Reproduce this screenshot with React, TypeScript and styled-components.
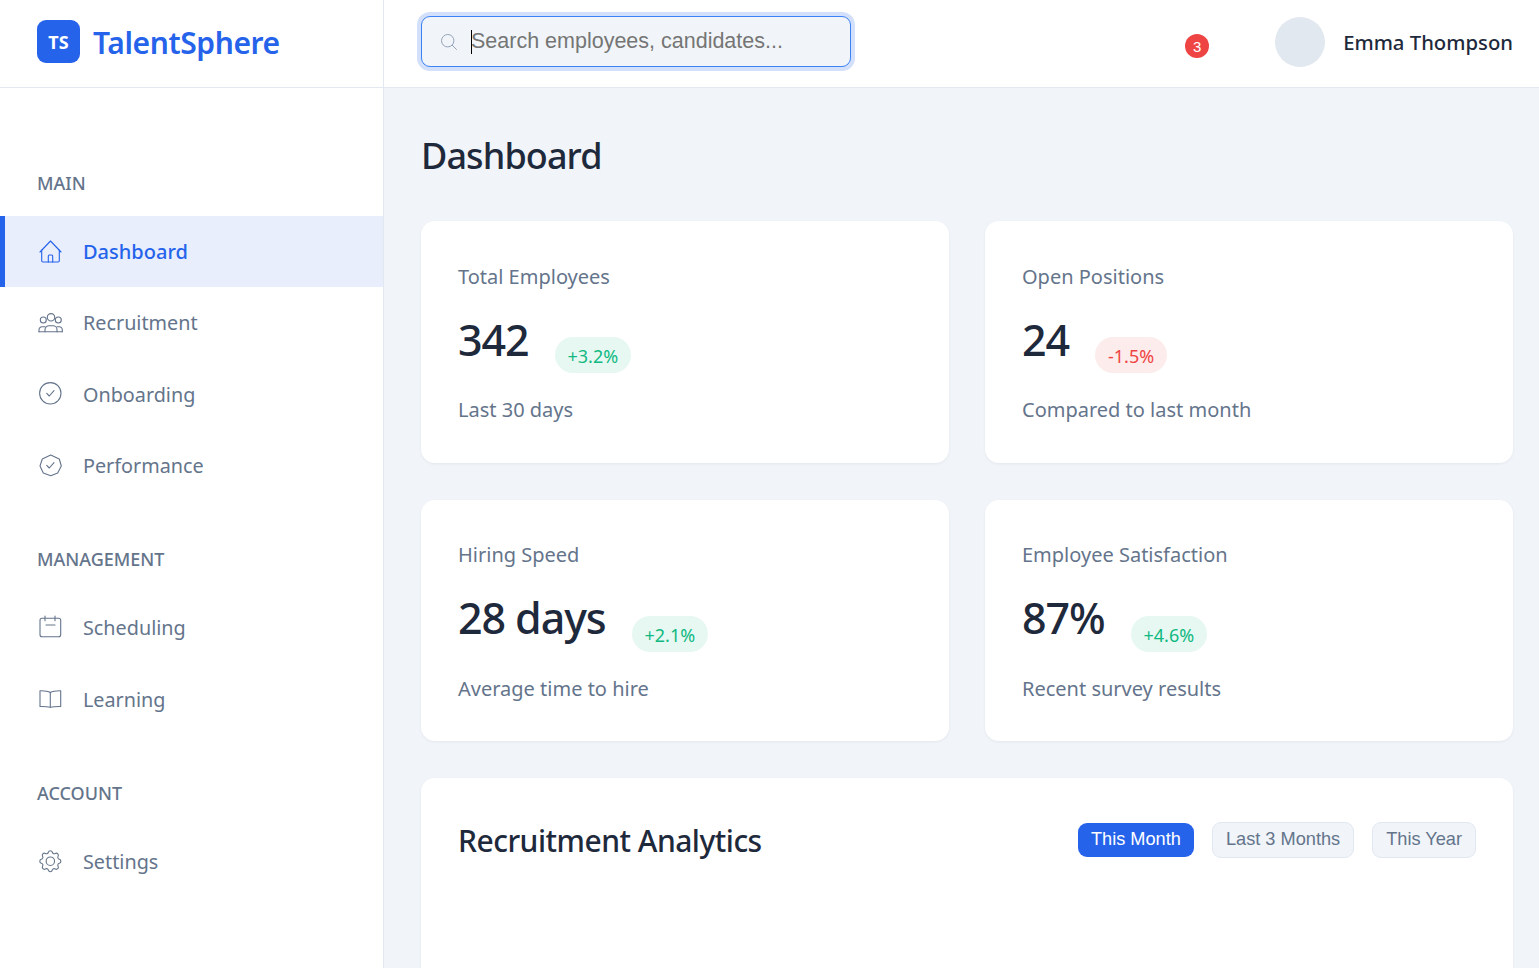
import React from "react";
import styled, { createGlobalStyle } from "styled-components";
import { HiOutlineMagnifyingGlass } from "react-icons/hi2";

const GlobalStyle = createGlobalStyle`
  html, body {
    margin: 0;
    height: 100%;
    overflow: hidden;
    background: #f1f5f9;
    font-family: "Noto Sans", sans-serif;
  }
  * {
    box-sizing: border-box;
  }
`;

const Shell = styled.div`
  display: grid;
  grid-template-columns: 384px 1fr;
  grid-template-rows: 88px 1fr;
  height: 968px;
  overflow: hidden;
`;

const Brand = styled.div`
  display: flex;
  align-items: center;
  gap: 13px;
  padding: 0 37px 4px;
  background: #fff;
  border-right: 1px solid #e2e8f0;
  border-bottom: 1px solid #e2e8f0;
`;

const LogoMark = styled.div`
  display: flex;
  align-items: center;
  justify-content: center;
  width: 43px;
  height: 43px;
  border-radius: 9px;
  background: #2563eb;
  color: #fff;
  font-size: 18px;
  font-weight: 700;
`;

const LogoText = styled.span`
  margin-top: 1px;
  color: #2563eb;
  font-size: 30px;
  font-weight: 600;
  letter-spacing: -0.4px;
`;

const Topbar = styled.header`
  display: flex;
  align-items: center;
  justify-content: space-between;
  padding: 0 26px 4px 37px;
  background: #fff;
  border-bottom: 1px solid #e2e8f0;
`;

const SearchBox = styled.label`
  display: flex;
  align-items: center;
  width: 430px;
  height: 51px;
  padding: 0 17px;
  gap: 12px;
  background: #f1f5f9;
  border: 1px solid #3b82f6;
  border-radius: 9px;
  box-shadow: 0 0 0 4px rgba(37, 99, 235, 0.2);
  color: #94a3b8;
  font-size: 20px;

  svg {
    flex: none;
    stroke-width: 1.2;
  }
`;

const SearchField = styled.span`
  position: relative;
  display: flex;
  flex: 1;
  min-width: 0;

  &::before {
    content: "";
    position: absolute;
    left: 0;
    top: 0;
    width: 1px;
    height: 24px;
    background: #000;
  }
`;

const SearchInput = styled.input`
  flex: 1;
  min-width: 0;
  height: 24px;
  padding: 0;
  border: 0;
  outline: 0;
  background: transparent;
  color: #1e293b;
  caret-color: #000;
  font-family: "Liberation Sans", sans-serif;
  font-size: 21.5px;

  &::placeholder {
    color: #757575;
    opacity: 1;
  }
`;

const UserArea = styled.div`
  display: flex;
  align-items: center;
`;

const CountBadge = styled.span`
  display: flex;
  align-items: center;
  justify-content: center;
  width: 24px;
  height: 24px;
  margin-top: 9px;
  margin-right: 66px;
  border-radius: 50%;
  background: #ef4444;
  color: #fff;
  font-family: "Liberation Sans", sans-serif;
  font-size: 15px;
`;

const Avatar = styled.div`
  width: 50px;
  height: 50px;
  margin-right: 18px;
  border-radius: 50%;
  background: #e2e8f0;
`;

const UserName = styled.span`
  margin-top: 1px;
  color: #1e293b;
  font-size: 20.3px;
  font-weight: 500;
`;

const Sidebar = styled.aside`
  padding-top: 83px;
  background: #fff;
  border-right: 1px solid #e2e8f0;
`;

const NavSection = styled.section`
  margin-bottom: 46px;
`;

const SectionLabel = styled.h3`
  margin: 0 0 21px;
  padding: 0 37px;
  color: #64748b;
  font-size: 18px;
  font-weight: 500;
  line-height: 24px;
`;

const NavItem = styled.a<{ $active?: boolean }>`
  display: flex;
  align-items: center;
  gap: 19px;
  height: 71.3px;
  padding-left: ${({ $active }) => ($active ? "33px" : "38px")};
  border-left: ${({ $active }) => ($active ? "5px solid #2563eb" : "0")};
  background: ${({ $active }) => ($active ? "#e8eefc" : "transparent")};
  color: ${({ $active }) => ($active ? "#2563eb" : "#64748b")};
  font-size: ${({ $active }) => ($active ? "20px" : "19.8px")};
  font-weight: ${({ $active }) => ($active ? 500 : 400)};
`;

const NavIcon = styled.svg.attrs({ viewBox: "0 0 26 26", fill: "none" })`
  flex: none;
  width: 26px;
  height: 26px;
  stroke: currentColor;
  stroke-width: 1.1;
  stroke-linecap: round;
  stroke-linejoin: round;
`;

const Main = styled.main`
  padding: 0 26px 0 37px;
`;

const PageTitle = styled.h1`
  margin: 41px 0 38px;
  color: #1e293b;
  font-size: 36px;
  font-weight: 500;
  letter-spacing: -0.9px;
  line-height: 54px;
`;

const StatGrid = styled.div`
  display: grid;
  grid-template-columns: 1fr 1fr;
  gap: 37px 36px;
  margin-bottom: 37px;
`;

const Card = styled.div`
  background: #fff;
  border-radius: 14px;
  box-shadow: 0 1px 3px rgba(15, 23, 42, 0.06);
`;

const StatCard = styled(Card)`
  height: 241.5px;
  padding: 39.7px 37px 0;
`;

const StatLabel = styled.div`
  color: #64748b;
  font-size: 20px;
  line-height: 32px;
`;

const StatRow = styled.div`
  display: flex;
  align-items: flex-start;
  gap: 26px;
  margin-top: 18.3px;
  height: 62px;
`;

const StatValue = styled.span`
  color: #1e293b;
  font-size: 43px;
  font-weight: 500;
  letter-spacing: -1.1px;
  line-height: 58px;
`;

const Change = styled.span<{ $down?: boolean }>`
  display: flex;
  align-items: center;
  height: 36px;
  margin-top: 26.3px;
  padding: 2px 13px 0;
  border-radius: 18px;
  background: ${({ $down }) => ($down ? "#fdecec" : "#e7f8f2")};
  color: ${({ $down }) => ($down ? "#ef4444" : "#10b981")};
  font-size: 18px;
`;

const StatNote = styled.div`
  margin-top: 21.3px;
  color: #64748b;
  font-size: 20px;
  line-height: 32px;
`;

const ChartCard = styled(Card)`
  height: 420px;
  padding: 42px 37px;
`;

const ChartHeader = styled.div`
  display: flex;
  align-items: center;
  justify-content: space-between;
`;

const ChartTitle = styled.h2`
  margin: 0;
  color: #1e293b;
  font-size: 30px;
  font-weight: 500;
  letter-spacing: -0.5px;
`;

const RangeTabs = styled.div`
  display: flex;
  align-items: center;
  gap: 18px;
  margin-top: -2px;
`;

const RangeButton = styled.button<{ $active?: boolean }>`
  height: ${({ $active }) => ($active ? "34px" : "36px")};
  padding: 0 13px;
  border: ${({ $active }) => ($active ? "0" : "1px solid #e2e8f0")};
  border-radius: 9px;
  background: ${({ $active }) => ($active ? "#2563eb" : "#f1f5f9")};
  color: ${({ $active }) => ($active ? "#fff" : "#64748b")};
  font-family: "Liberation Sans", sans-serif;
  font-size: 18.2px;
`;

const HomeIcon = () => (
  <NavIcon>
    <path d="M2 13 12.5 2 23 13" />
    <path d="M3.7 11v10.8a1.2 1.2 0 0 0 1.2 1.2h15.2a1.2 1.2 0 0 0 1.2-1.2V11" />
    <path d="M10.3 23v-6a1 1 0 0 1 1-1h2.4a1 1 0 0 1 1 1v6" />
  </NavIcon>
);

const PeopleIcon = () => (
  <NavIcon>
    <circle cx="13" cy="7.3" r="3.7" />
    <circle cx="5.3" cy="10" r="3" />
    <circle cx="20.3" cy="10" r="3" />
    <path d="M1 21.7h23.3" />
    <path d="M7 21.7v-2a4 4 0 0 1 4-4h4a4 4 0 0 1 4 4v2" />
    <path d="M1 21.7v-2a3 3 0 0 1 3-3h3" />
    <path d="M24.3 21.7v-2a3 3 0 0 0-3-3h-2.3" />
  </NavIcon>
);

const CheckCircleIcon = () => (
  <NavIcon>
    <circle cx="12.3" cy="12.3" r="10.7" />
    <path d="M8.7 12.3 11.3 15 16 9.7" />
  </NavIcon>
);

const BadgeIcon = () => (
  <NavIcon>
    <path d="M12.7 2 21.3 6 23.3 13 19.7 20 12.7 22.7 5.3 20 2 13 4.3 6Z" />
    <path d="M8.7 12.3 11.3 15 16 9.7" />
  </NavIcon>
);

const CalendarIcon = () => (
  <NavIcon>
    <rect x="2" y="3.3" width="20.7" height="18.4" rx="2" />
    <path d="M7 1v4.7M17 1v4.7M8 10h9" />
  </NavIcon>
);

const BookIcon = () => (
  <NavIcon>
    <path d="M12.3 6.5C10 5 6 4.7 3 4.7H2v15.8h1c3 0 7 .2 9.3.8 2.3-.6 5.7-.8 9.4-.8h1V4.7h-1c-3.7 0-7.1.3-9.4 1.8Z" />
    <path d="M12.3 6.5v14.8" />
  </NavIcon>
);

const GearIcon = () => (
  <NavIcon>
    <g transform="translate(-1.7 -0.8) scale(1.17)">
      <path
        vectorEffect="non-scaling-stroke"
        d="M10.325 4.317c.426-1.756 2.924-1.756 3.35 0a1.724 1.724 0 002.573 1.066c1.543-.94 3.31.826 2.37 2.37a1.724 1.724 0 001.065 2.572c1.756.426 1.756 2.924 0 3.35a1.724 1.724 0 00-1.066 2.573c.94 1.543-.826 3.31-2.37 2.37a1.724 1.724 0 00-2.572 1.065c-.426 1.756-2.924 1.756-3.35 0a1.724 1.724 0 00-2.573-1.066c-1.543.94-3.31-.826-2.37-2.37a1.724 1.724 0 00-1.065-2.572c-1.756-.426-1.756-2.924 0-3.35a1.724 1.724 0 001.066-2.573c-.94-1.543.826-3.31 2.37-2.37.996.608 2.296.07 2.572-1.065z"
      />
      <circle vectorEffect="non-scaling-stroke" cx="12" cy="12" r="3.6" />
    </g>
  </NavIcon>
);

const stats = [
  { label: "Total Employees", value: "342", change: "+3.2%", note: "Last 30 days" },
  { label: "Open Positions", value: "24", change: "-1.5%", down: true, note: "Compared to last month" },
  { label: "Hiring Speed", value: "28 days", change: "+2.1%", note: "Average time to hire" },
  { label: "Employee Satisfaction", value: "87%", change: "+4.6%", note: "Recent survey results" },
];

const App = () => {
  return (
    <Shell>
      <GlobalStyle />
      <Brand>
        <LogoMark>TS</LogoMark>
        <LogoText>TalentSphere</LogoText>
      </Brand>
      <Topbar>
        <SearchBox>
          <HiOutlineMagnifyingGlass />
          <SearchField>
            <SearchInput autoFocus placeholder="Search employees, candidates..." />
          </SearchField>
        </SearchBox>
        <UserArea>
          <CountBadge>3</CountBadge>
          <Avatar />
          <UserName>Emma Thompson</UserName>
        </UserArea>
      </Topbar>
      <Sidebar>
        <NavSection>
          <SectionLabel>MAIN</SectionLabel>
          <NavItem $active><HomeIcon />Dashboard</NavItem>
          <NavItem><PeopleIcon />Recruitment</NavItem>
          <NavItem><CheckCircleIcon />Onboarding</NavItem>
          <NavItem><BadgeIcon />Performance</NavItem>
        </NavSection>
        <NavSection>
          <SectionLabel>MANAGEMENT</SectionLabel>
          <NavItem><CalendarIcon />Scheduling</NavItem>
          <NavItem><BookIcon />Learning</NavItem>
        </NavSection>
        <NavSection>
          <SectionLabel>ACCOUNT</SectionLabel>
          <NavItem><GearIcon />Settings</NavItem>
        </NavSection>
      </Sidebar>
      <Main>
        <PageTitle>Dashboard</PageTitle>
        <StatGrid>
          {stats.map((s) => (
            <StatCard key={s.label}>
              <StatLabel>{s.label}</StatLabel>
              <StatRow>
                <StatValue>{s.value}</StatValue>
                <Change $down={s.down}>{s.change}</Change>
              </StatRow>
              <StatNote>{s.note}</StatNote>
            </StatCard>
          ))}
        </StatGrid>
        <ChartCard>
          <ChartHeader>
            <ChartTitle>Recruitment Analytics</ChartTitle>
            <RangeTabs>
              <RangeButton $active>This Month</RangeButton>
              <RangeButton>Last 3 Months</RangeButton>
              <RangeButton>This Year</RangeButton>
            </RangeTabs>
          </ChartHeader>
        </ChartCard>
      </Main>
    </Shell>
  );
};

export default App;
